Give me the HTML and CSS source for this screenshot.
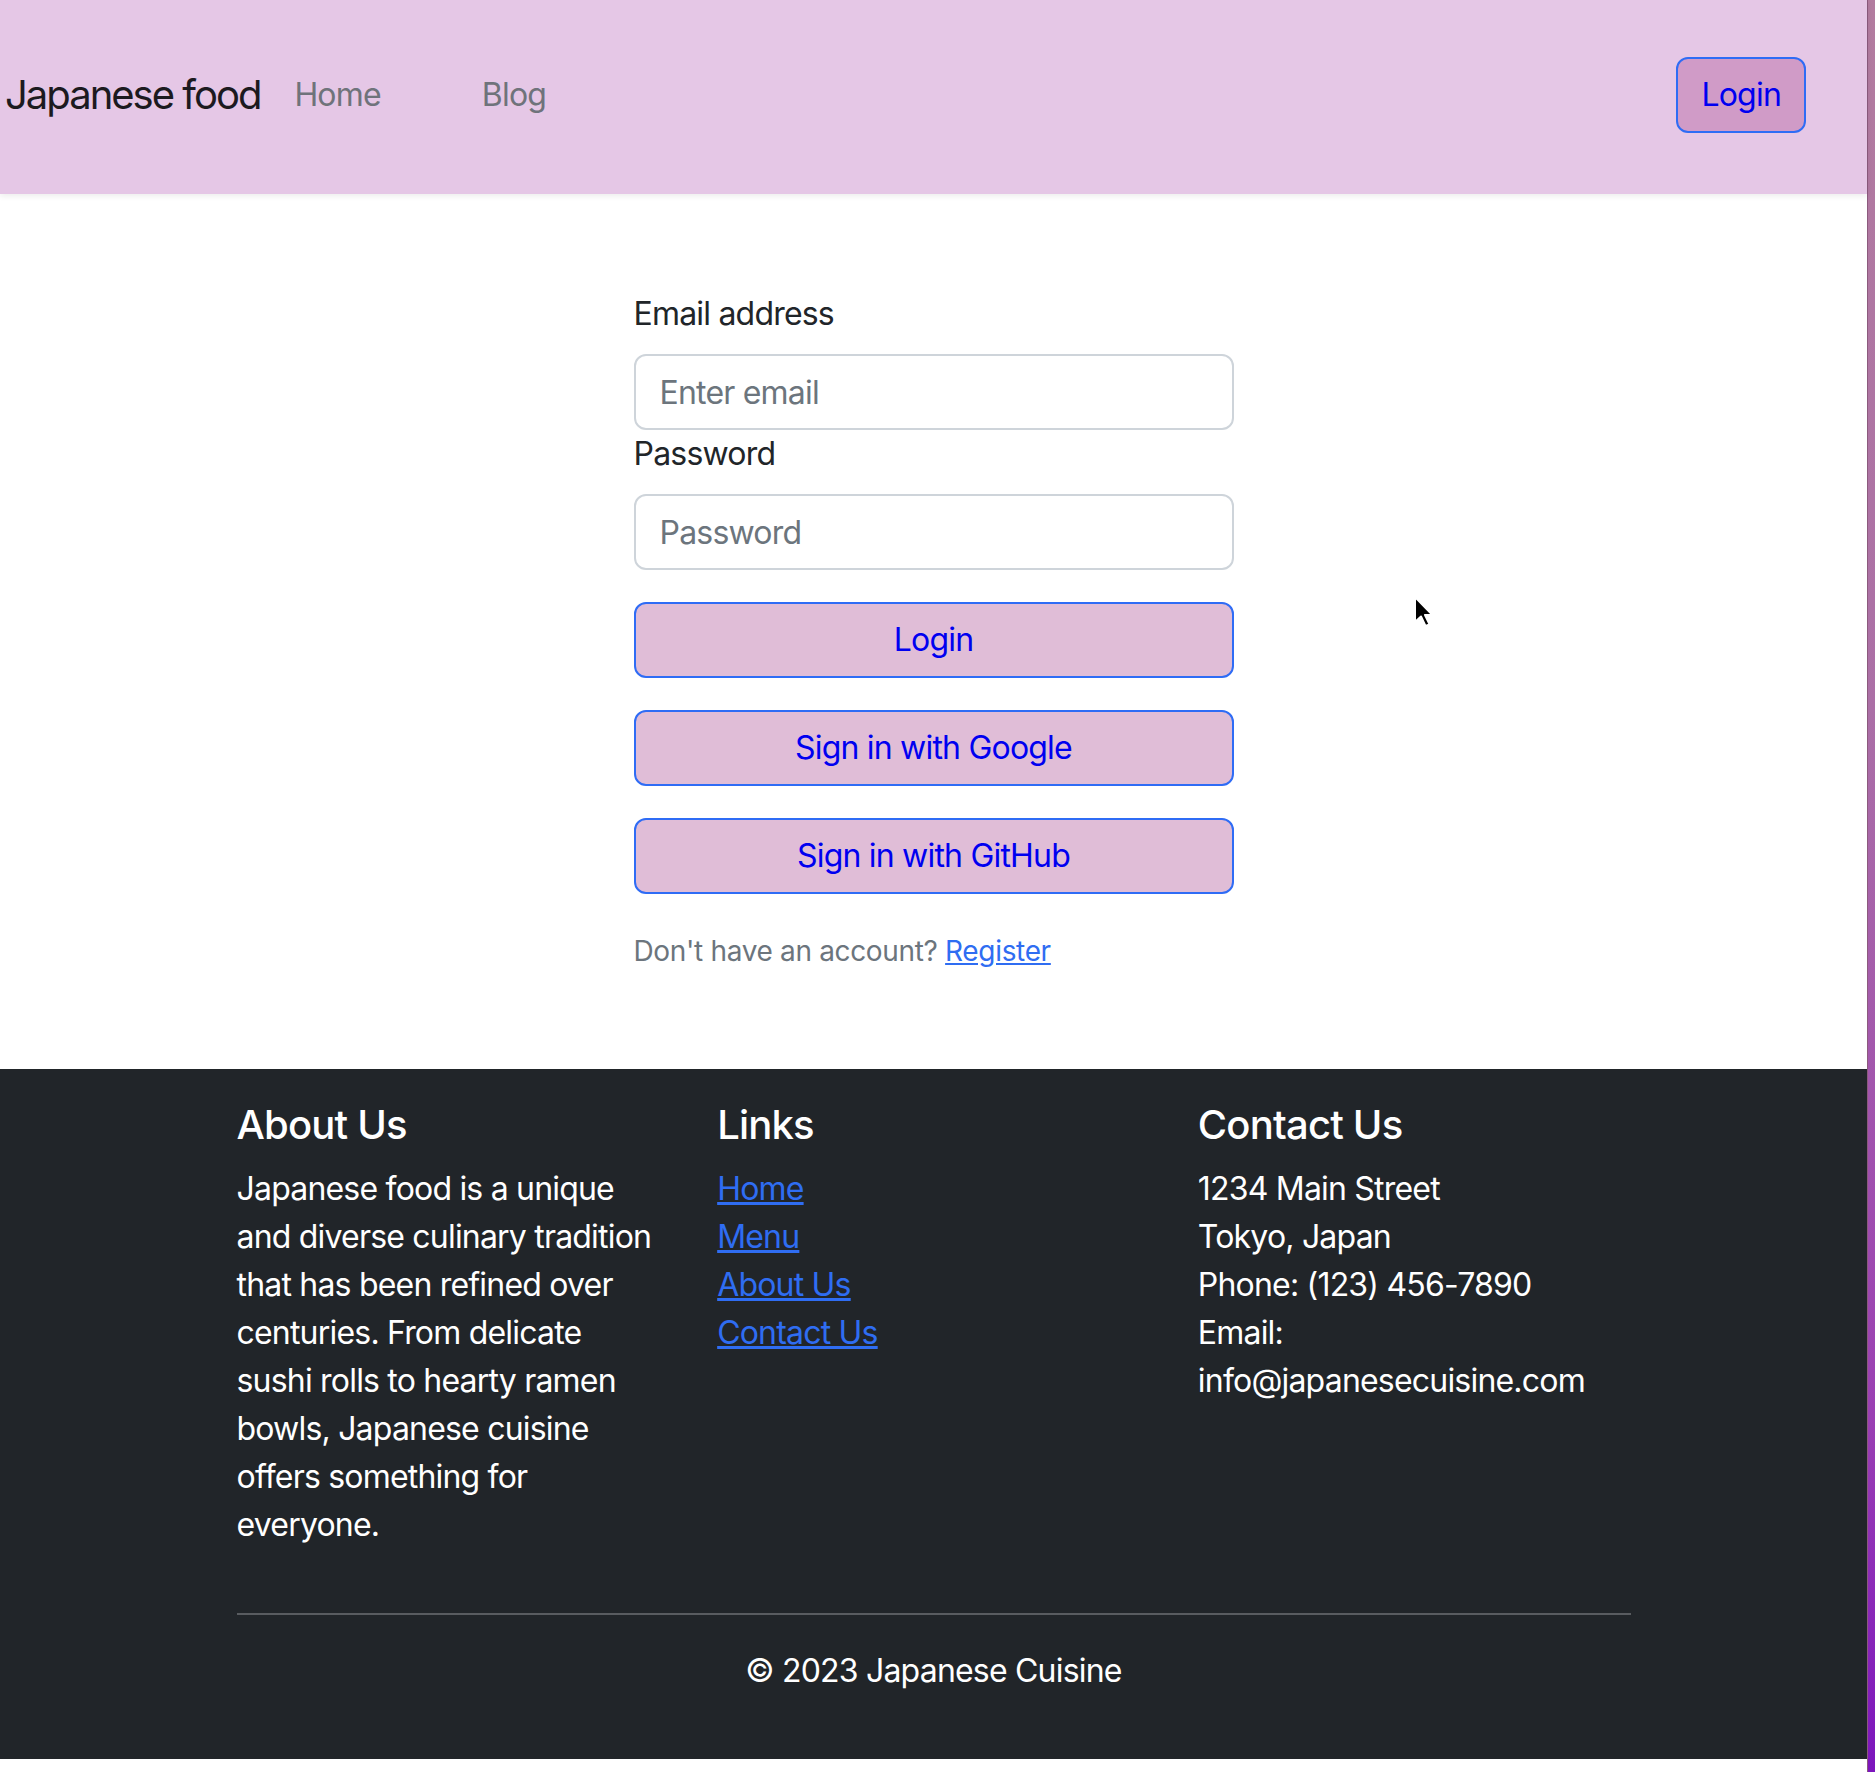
FILE: index.html
```html
<!DOCTYPE html>
<html lang="en">
<head>
<meta charset="utf-8">
<title>Japanese food - Login</title>
<link rel="stylesheet" href="styles.css">
</head>
<body>
<div class="screen">
  <div class="page">
    <nav class="navbar">
      <a class="brand" href="#">Japanese food</a>
      <ul class="nav">
        <li><a class="nav-link" href="#">Home</a></li>
        <li><a class="nav-link" href="#">Blog</a></li>
      </ul>
      <button class="btn nav-login" type="button">Login</button>
    </nav>

    <main class="main">
      <form class="login-form">
        <label class="form-label" for="email">Email address</label>
        <input class="form-control" id="email" type="email" placeholder="Enter email">
        <label class="form-label" for="password">Password</label>
        <input class="form-control" id="password" type="password" placeholder="Password">
        <button class="btn btn-block" type="button">Login</button>
        <button class="btn btn-block" type="button">Sign in with Google</button>
        <button class="btn btn-block" type="button">Sign in with GitHub</button>
        <p class="form-text">Don't have an account? <a class="link" href="#">Register</a></p>
      </form>
    </main>

    <footer class="footer">
      <div class="container">
        <div class="footer-row">
          <div class="footer-col">
            <h5 class="footer-title">About Us</h5>
            <p class="footer-text about-text">Japanese food is a unique and diverse culinary tradition that has been refined over centuries. From delicate sushi rolls to hearty ramen bowls, Japanese cuisine offers something for everyone.</p>
          </div>
          <div class="footer-col">
            <h5 class="footer-title">Links</h5>
            <ul class="footer-links">
              <li><a class="link" href="#">Home</a></li>
              <li><a class="link" href="#">Menu</a></li>
              <li><a class="link" href="#">About Us</a></li>
              <li><a class="link" href="#">Contact Us</a></li>
            </ul>
          </div>
          <div class="footer-col">
            <h5 class="footer-title">Contact Us</h5>
            <p class="footer-text">1234 Main Street<br>Tokyo, Japan<br>Phone: (123) 456-7890<br>Email: info@japanesecuisine.com</p>
          </div>
        </div>
        <hr class="divider">
        <p class="copyright">© 2023 Japanese Cuisine</p>
      </div>
    </footer>
  </div>
  <div class="edge"></div>
</div>
<svg class="cursor" width="22" height="34" viewBox="0 0 22 34" aria-hidden="true">
  <path d="M2 2 L2 27 L8 21.5 L12.5 31 L16.5 29.3 L12 20 L19.5 20 Z" fill="#000" stroke="#fff" stroke-width="2" stroke-linejoin="round"/>
</svg>
</body>
</html>
```

FILE: styles.css
```css
* { box-sizing: border-box; }

html, body {
  margin: 0;
  padding: 0;
  background: #ffffff;
}

body {
  font-family: Inter, "Liberation Sans", Arial, sans-serif;
  font-size: 32px;
  line-height: 1.5;
  letter-spacing: -0.025em;
  color: #212529;
  position: relative;
}

.screen {
  display: flex;
  width: 1875px;
  min-height: 1781px;
}

.page {
  flex: 0 0 1867px;
  background: #ffffff;
}

.edge {
  flex: 0 0 8px;
  margin-bottom: 9px;
  border-left: 1px solid #8b5a7d;
  background: linear-gradient(180deg, #b27c9f 0%, #ab6fa6 40%, #9a3fb3 80%, #7c15bd 100%);
}

/* Navbar */
.navbar {
  display: flex;
  align-items: center;
  height: 194px;
  padding: 0 61px 4px 5px;
  background: #e5c7e6;
  box-shadow: 0 2px 6px rgba(0, 0, 0, 0.08);
  position: relative;
}

.brand {
  font-size: 40px;
  line-height: 1.5;
  color: #1c1a1f;
  text-decoration: none;
  letter-spacing: -0.05em;
}

.nav {
  display: flex;
  gap: 101px;
  list-style: none;
  margin: 0 0 0 34px;
  padding: 0;
}

.nav-link {
  color: #6f737b;
  text-decoration: none;
  font-size: 32px;
}

.btn {
  font-family: inherit;
  font-size: 32px;
  line-height: 1.5;
  letter-spacing: -0.025em;
  color: #0000f0;
  border: 2px solid #2f6cf5;
  border-radius: 12px;
  cursor: pointer;
}

.nav-login {
  margin-left: auto;
  height: 76px;
  padding: 0 23px;
  background: #d09bc7;
}

/* Main form */
.main {
  padding: 96px 0 97px;
}

.login-form {
  width: 600px;
  margin: 0 auto;
  display: flex;
  flex-direction: column;
}

.form-label {
  display: block;
  margin-bottom: 16px;
  line-height: 48px;
}

.form-control {
  display: block;
  width: 100%;
  height: 76px;
  padding: 0 24px;
  font-family: inherit;
  font-size: 32px;
  letter-spacing: -0.025em;
  color: #212529;
  background: #ffffff;
  border: 2px solid #ced4da;
  border-radius: 12px;
}

.form-control::placeholder {
  color: #6c757d;
}

.btn-block {
  display: block;
  width: 100%;
  height: 76px;
  margin-top: 32px;
  background: #e0bdd7;
}

.form-text {
  margin: 36px 0 0;
  font-size: 28px;
  line-height: 42px;
  letter-spacing: -0.012em;
  color: #6c757d;
}

.link {
  color: #2f6df2;
  text-decoration: underline;
}

/* Footer */
.footer {
  background: #212529;
  color: #ffffff;
  padding: 32px 0;
}

.container {
  width: 1394px;
  margin: 0 auto;
}

.footer-row {
  display: grid;
  grid-template-columns: repeat(3, 1fr);
  column-gap: 48px;
}

.footer-title {
  font-size: 40px;
  font-weight: 500;
  line-height: 1.2;
  margin: 0 0 16px;
}

.footer-text {
  margin: 0 0 32px;
}

.about-text {
  max-width: 421px;
}

.footer-links {
  list-style: none;
  margin: 0 0 32px;
  padding: 0;
}

.divider {
  margin: 32px 0;
  border: 0;
  border-top: 2px solid #595c60;
}

.copyright {
  margin: 0 0 32px;
  text-align: center;
}

.cursor {
  position: absolute;
  left: 1413px;
  top: 595px;
}
```
